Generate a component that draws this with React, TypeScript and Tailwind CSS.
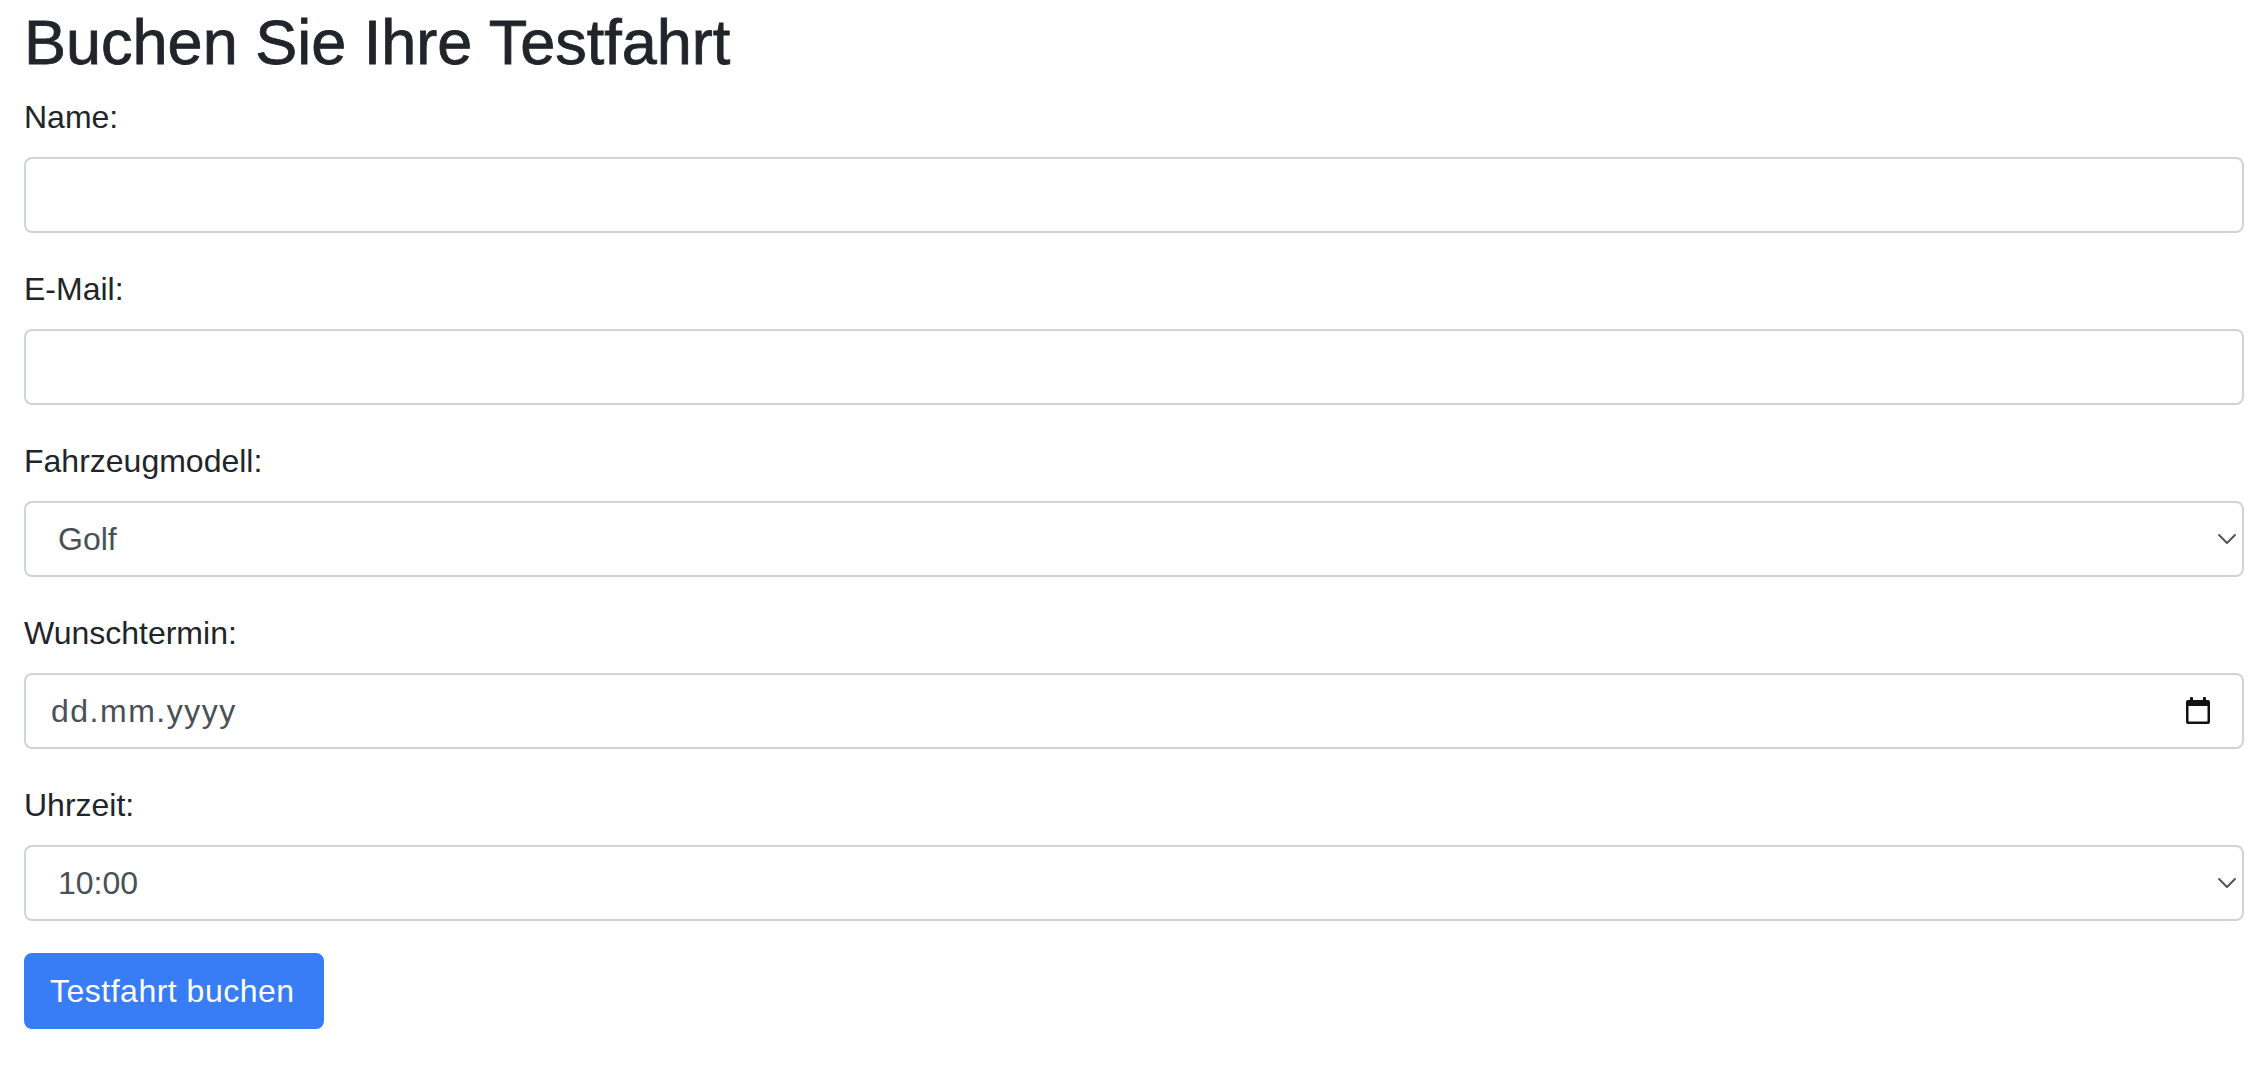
import { useState } from 'react'

const labelCls = 'block text-[32px] leading-[48px] text-[#212529] mb-4'
const fieldCls =
  'block w-full h-[76px] rounded-[8px] border-2 border-[#ced4da] bg-white text-[32px] leading-[48px] text-[#495057] outline-none'

function Chevron() {
  return (
    <svg className="pointer-events-none absolute right-[8px] top-1/2 -translate-y-1/2" width="18" height="11" viewBox="0 0 18 11" fill="none">
      <path d="M1 1.5l8 8 8-8" stroke="#4b4f55" strokeWidth="1.8" strokeLinecap="round" strokeLinejoin="round" />
    </svg>
  )
}

function CalendarIcon() {
  return (
    <svg width="26" height="28" viewBox="0 0 26 28" fill="none">
      <rect x="1" y="3" width="24" height="24" rx="2" fill="#111" />
      <rect x="3.5" y="9" width="19" height="15.5" fill="#fff" />
      <rect x="5" y="0" width="3" height="5" rx="1" fill="#111" />
      <rect x="18" y="0" width="3" height="5" rx="1" fill="#111" />
    </svg>
  )
}

export default function App() {
  const [name, setName] = useState('')
  const [email, setEmail] = useState('')
  const [model, setModel] = useState('Golf')
  const [time, setTime] = useState('10:00')

  return (
    <div className="min-h-screen bg-white px-6" style={{ fontFamily: '"Liberation Sans", Arial, sans-serif' }}>
      <h1 className="pt-[4px] mb-[13px] text-[63px] leading-[76px] font-medium text-[#212529] [-webkit-text-stroke:0.8px_#212529]">
        Buchen Sie Ihre Testfahrt
      </h1>

      <form onSubmit={e => e.preventDefault()}>
        <div className="mb-8">
          <label className={labelCls}>Name:</label>
          <input className={`${fieldCls} px-6`} value={name} onChange={e => setName(e.target.value)} />
        </div>

        <div className="mb-8">
          <label className={labelCls}>E-Mail:</label>
          <input type="email" className={`${fieldCls} px-6`} value={email} onChange={e => setEmail(e.target.value)} />
        </div>

        <div className="mb-8">
          <label className={labelCls}>Fahrzeugmodell:</label>
          <div className="relative">
            <select
              className={`${fieldCls} appearance-none pl-[32px] pr-12`}
              value={model}
              onChange={e => setModel(e.target.value)}
            >
              <option>Golf</option>
              <option>Passat</option>
              <option>Tiguan</option>
              <option>ID.4</option>
            </select>
            <Chevron />
          </div>
        </div>

        <div className="mb-8">
          <label className={labelCls}>Wunschtermin:</label>
          <div className={`${fieldCls} flex items-center justify-between pl-[25px] pr-[31px]`}>
            <span className="tracking-[1.5px]">dd.mm.yyyy</span>
            <CalendarIcon />
          </div>
        </div>

        <div className="mb-8">
          <label className={labelCls}>Uhrzeit:</label>
          <div className="relative">
            <select
              className={`${fieldCls} appearance-none pl-[32px] pr-12`}
              value={time}
              onChange={e => setTime(e.target.value)}
            >
              <option>09:00</option>
              <option>10:00</option>
              <option>11:00</option>
              <option>14:00</option>
              <option>16:00</option>
            </select>
            <Chevron />
          </div>
        </div>

        <button
          type="submit"
          className="h-[76px] rounded-[8px] border-2 border-[#387cf6] bg-[#387cf6] pl-[24px] pr-[27px] text-[32px] leading-[48px] tracking-[0.5px] text-white"
        >
          Testfahrt buchen
        </button>
      </form>
    </div>
  )
}
